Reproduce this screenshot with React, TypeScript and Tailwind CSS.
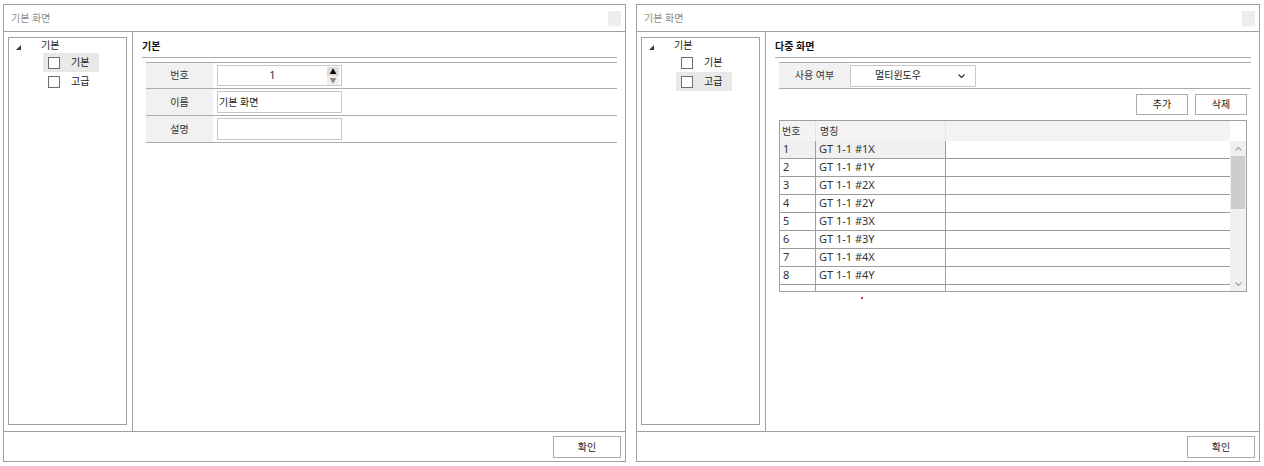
import React from 'react';

const FONT = "font-['Noto_Sans','Noto_Sans_CJK_KR',sans-serif]";

function Triangle() {
  return (
    <svg width="5" height="5" viewBox="0 0 5 5" className="block">
      <path d="M5 0 L5 5 L0 5 Z" fill="#3a3a3a" />
    </svg>
  );
}

function Chevron({ up, color, w = 7 }: { up?: boolean; color: string; w?: number }) {
  return (
    <svg width={w} height="4" viewBox="0 0 7 4" className="block">
      <path d={up ? 'M0.5 3.5 L3.5 0.5 L6.5 3.5' : 'M0.5 0.5 L3.5 3.5 L6.5 0.5'} fill="none" stroke={color} strokeWidth="1.2" />
    </svg>
  );
}

function TreeItem({ label, sel }: { label: string; sel: boolean }) {
  return (
    <div className={`ml-[34px] w-[56px] h-[19px] flex items-center ${sel ? 'bg-[#e8e8e8]' : ''}`}>
      <div className="ml-[5px] w-[12px] h-[12px] border border-[#6e6e6e] bg-white" />
      <span className="ml-[11px] text-[10px] text-[#222]">{label}</span>
    </div>
  );
}

function Tree({ sel }: { sel: number }) {
  return (
    <div className="w-full h-full border border-[#a0a0a0] bg-white">
      <div className="h-[15px] flex items-center">
        <div className="ml-[7px] mt-[3px]">
          <Triangle />
        </div>
        <span className="ml-[20px] text-[10px] text-[#222]">기본</span>
      </div>
      <TreeItem label="기본" sel={sel === 0} />
      <TreeItem label="고급" sel={sel === 1} />
    </div>
  );
}

function Window({ sel, w, children }: { sel: number; w: string; children: React.ReactNode }) {
  return (
    <div className={`${w} h-[458px] border border-[#a0a0a0] bg-white flex flex-col`}>
      <div className="h-[27px] border-b border-[#a0a0a0] flex items-start justify-between pl-[7px] pr-[4px]">
        <span className="mt-[6px] text-[10px] text-[#8c8c8c]">기본 화면</span>
        <div className="mt-[6px] w-[13px] h-[15px] bg-[#ededed] flex items-center justify-center">
          <div className="w-[5px] h-[1px] bg-[#f8f8f8]" />
        </div>
      </div>
      <div className="h-[399px] flex">
        <div className="w-[129px] h-full border-r border-[#a0a0a0] pl-[4px] pt-[5px] pr-[5px] pb-[6px]">
          <Tree sel={sel} />
        </div>
        <div className="flex-1 pl-[9px] pr-[8px] flex flex-col">{children}</div>
      </div>
      <div className="h-[30px] border-t border-[#a0a0a0] flex justify-end items-start pt-[4px] pr-[4px]">
        <button className="w-[68px] h-[22px] border border-[#ababab] bg-white text-[10px] text-[#222] flex items-center justify-center">
          확인
        </button>
      </div>
    </div>
  );
}

function Heading({ text }: { text: string }) {
  return (
    <div className="h-[26px] shrink-0 border-b border-[#ababab] flex items-center pt-[3px]">
      <span className="text-[10px] font-bold text-[#111]">{text}</span>
    </div>
  );
}

function FormRow({ label, h, children }: { label: string; h: string; children: React.ReactNode }) {
  return (
    <div className={`${h} border-b border-[#ababab] flex items-center`}>
      <div className="w-[67px] h-full bg-[#f1f1f1] flex items-center justify-center text-[10px] text-[#333]">{label}</div>
      {children}
    </div>
  );
}

function LeftContent() {
  return (
    <>
      <Heading text="기본" />
      <div className="mt-[4px] ml-[4px] border-t border-[#ababab]">
        <FormRow label="번호" h="h-[26px]">
          <div className="ml-[4px] w-[125px] h-[21px] border border-[#c8c8c8] flex items-center">
            <span className="flex-1 text-center text-[11px] text-[#333]">1</span>
            <div className="w-[12px] h-[18px] mr-[2px] flex flex-col">
              <div className="h-[9px] bg-[#dcdcdc] flex items-center justify-center text-[7px] leading-none text-black">▲</div>
              <div className="h-[9px] bg-[#f0f0f0] flex items-center justify-center text-[7px] leading-none text-[#8a8a8a]">▼</div>
            </div>
          </div>
        </FormRow>
        <FormRow label="이름" h="h-[27px]">
          <div className="ml-[4px] w-[125px] h-[22px] border border-[#c8c8c8] flex items-center pl-[1px] text-[10px] text-[#222]">
            기본 화면
          </div>
        </FormRow>
        <FormRow label="설명" h="h-[27px]">
          <div className="ml-[4px] w-[125px] h-[22px] border border-[#c8c8c8]" />
        </FormRow>
      </div>
    </>
  );
}

const rows = ['GT 1-1 #1X', 'GT 1-1 #1Y', 'GT 1-1 #2X', 'GT 1-1 #2Y', 'GT 1-1 #3X', 'GT 1-1 #3Y', 'GT 1-1 #4X', 'GT 1-1 #4Y'];

function RightContent() {
  return (
    <>
      <Heading text="다중 화면" />
      <div className="mt-[4px] ml-[4px] border-t border-[#ababab]">
        <div className="h-[26px] border-b border-[#ababab] flex items-center">
          <div className="w-[71px] h-full bg-[#f1f1f1] flex items-center justify-center text-[10px] text-[#333]">사용 여부</div>
          <div className="w-[126px] h-[22px] border border-[#c8c8c8] flex items-center">
            <span className="ml-[24px] text-[10px] text-[#222]">멀티윈도우</span>
            <div className="ml-auto mr-[10px]">
              <Chevron color="#333" />
            </div>
          </div>
        </div>
      </div>
      <div className="mt-[5px] mr-[4px] flex justify-end gap-[7px]">
        <button className="w-[52px] h-[21px] border border-[#ababab] bg-white text-[10px] text-[#222] flex items-center justify-center">추가</button>
        <button className="w-[52px] h-[21px] border border-[#ababab] bg-white text-[10px] text-[#222] flex items-center justify-center">삭제</button>
      </div>
      <div className="mt-[5px] mx-[4px] h-[172px] border border-[#a0a0a0] flex overflow-hidden">
        <div className="flex-1 flex flex-col">
          <div className="h-[20px] shrink-0 bg-[#f3f3f3] flex items-center text-[10px] text-[#333]">
            <div className="w-[36px] h-full pl-[2px] flex items-center border-r border-[#e4e4e4]">번호</div>
            <div className="w-[130px] h-full pl-[4px] flex items-center border-r border-[#e4e4e4]">명칭</div>
          </div>
          {rows.map((r, i) => (
            <div key={r} className="h-[18px] shrink-0 border-b border-[#9c9c9c] flex text-[11px] text-[#333]">
              <div className={`w-[36px] h-full pl-[3px] flex items-center border-r border-[#9c9c9c] ${i === 0 ? 'bg-[#f0f0f0]' : ''}`}>{i + 1}</div>
              <div className={`w-[130px] h-full pl-[3px] flex items-center border-r border-[#9c9c9c] ${i === 0 ? 'bg-[#f0f0f0]' : ''}`}>{r}</div>
              <div className="flex-1" />
            </div>
          ))}
          <div className="flex-1 flex">
            <div className="w-[36px] border-r border-[#9c9c9c]" />
            <div className="w-[130px] border-r border-[#9c9c9c]" />
          </div>
        </div>
        <div className="w-[16px] flex flex-col">
          <div className="h-[20px] bg-white" />
          <div className="flex-1 bg-[#f0f0f0] flex flex-col items-center">
            <div className="h-[15px] w-full flex items-center justify-center">
              <Chevron up color="#a6a6a6" />
            </div>
            <div className="w-[14px] h-[53px] bg-[#cdcdcd]" />
            <div className="flex-1" />
            <div className="h-[14px] w-full flex items-center justify-center">
              <Chevron color="#a6a6a6" />
            </div>
          </div>
        </div>
      </div>
      <div className="mt-[5px] ml-[86px] w-[2px] h-[2px] bg-[#e03030]" />
    </>
  );
}

export default function App() {
  return (
    <div className={`w-[1264px] h-[466px] bg-white ${FONT} flex items-start gap-[10px] pl-[3px] pt-[4px]`}>
      <Window sel={0} w="w-[623px]">
        <LeftContent />
      </Window>
      <Window sel={1} w="w-[624px]">
        <RightContent />
      </Window>
    </div>
  );
}
